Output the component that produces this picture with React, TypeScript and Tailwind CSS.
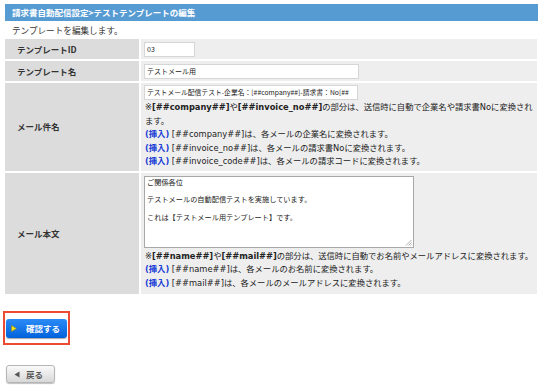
import React from 'react';

const FONT = 'font-["Noto_Sans_CJK_JP","Noto_Sans",sans-serif]';
const NOTE_FONT = 'font-["DejaVu_Sans","Noto_Sans_CJK_JP",sans-serif]';

function Label({ children }: { children: React.ReactNode }) {
  return (
    <div className="flex items-center bg-[#dcdcdc] pl-[12px] text-[8.5px] font-bold text-[#333]">
      {children}
    </div>
  );
}

function Insert({ tag, text }: { tag: string; text: string }) {
  return (
    <div>
      <span className="font-bold text-[#1b3fd6]">(挿入)</span> [{tag}]は、{text}
    </div>
  );
}

export default function App() {
  return (
    <div className={`${FONT} w-[541px] h-[392px] bg-white text-[#222] pt-[4px]`}>
      {/* header */}
      <div className="mx-[5px] w-[533px] h-[17px] bg-[#579bd3] flex items-center pl-[7px] text-[8.5px] font-bold text-white">
        請求書自動配信設定&gt;テストテンプレートの編集
      </div>
      <div className="pl-[12px] h-[18px] flex items-center text-[8.6px] text-[#333]">
        テンプレートを編集します。
      </div>

      {/* form table */}
      <div className="ml-[5px] w-[532px] grid grid-cols-[134px_1fr] gap-[2px]">
        <Label>テンプレートID</Label>
        <div className="bg-[#eeeeee] h-[20px] flex items-center pl-[3px]">
          <div className="w-[51px] h-[15px] bg-white border border-[#d6d6d6] flex items-center pl-[2px] text-[7px]">03</div>
        </div>

        <Label>テンプレート名</Label>
        <div className="bg-[#eeeeee] h-[20px] flex items-center pl-[3px]">
          <div className="w-[215px] h-[15px] bg-white border border-[#d6d6d6] flex items-center pl-[2px] text-[7px]">テストメール用</div>
        </div>

        <Label>メール件名</Label>
        <div className="bg-[#eeeeee] pl-[3px] pt-[2px] pb-[2px] text-[8.3px] leading-[13.5px] text-[#222]">
          <div className="w-[214px] h-[15px] bg-white border border-[#d6d6d6] flex items-center pl-[2px] text-[6.8px] overflow-hidden whitespace-nowrap">
            テストメール配信テスト-企業名：[##company##]-請求書：No[##
          </div>
          <div className={`${NOTE_FONT} pl-[1px] pt-[1px]`}>
            <div className="whitespace-nowrap">
              ※<b>[##company##]</b>や<b>[##invoice_no##]</b>の部分は、送信時に自動で企業名や請求書Noに変換され
            </div>
            <div>ます。</div>
            <Insert tag="##company##" text="各メールの企業名に変換されます。" />
            <Insert tag="##invoice_no##" text="各メールの請求書Noに変換されます。" />
            <Insert tag="##invoice_code##" text="各メールの請求コードに変換されます。" />
          </div>
        </div>

        <Label>メール本文</Label>
        <div className="bg-[#eeeeee] pl-[3px] pt-[3px] pb-[4px] text-[8.3px] leading-[13.5px] text-[#222]">
          <div className="relative w-[270px] h-[72px] bg-white border border-[#a8a8a8] px-[2px] pt-[1px] text-[7.2px] leading-[8.8px]">
            <div>ご関係各位</div>
            <div>&nbsp;</div>
            <div>テストメールの自動配信テストを実施しています。</div>
            <div>&nbsp;</div>
            <div>これは【テストメール用テンプレート】です。</div>
            <svg className="absolute right-[1px] bottom-[1px]" width="7" height="7" viewBox="0 0 7 7">
              <path d="M6.5 1 L1 6.5 M6.5 3.5 L3.5 6.5 M6.5 5.5 L5.5 6.5" stroke="#999" strokeWidth="0.8" />
            </svg>
          </div>
          <div className={`${NOTE_FONT} pl-[1px] pt-[2px]`}>
            <div className="whitespace-nowrap">
              ※<b>[##name##]</b>や<b>[##mail##]</b>の部分は、送信時に自動でお名前やメールアドレスに変換されます。
            </div>
            <Insert tag="##name##" text="各メールのお名前に変換されます。" />
            <Insert tag="##mail##" text="各メールのメールアドレスに変換されます。" />
          </div>
        </div>
      </div>

      {/* confirm button */}
      <div className="mt-[17px] ml-[3px] w-[67px] h-[34px] border-2 border-[#ec4a32] flex items-center pl-[1px]">
        <button className="w-[61px] h-[19px] rounded-[3px] bg-gradient-to-b from-[#2a8bf7] to-[#0062dc] shadow-[0_1px_1px_rgba(0,0,0,0.35)] flex items-center pl-[5px] text-white text-[8.5px] font-bold">
          <svg width="6" height="7" viewBox="0 0 6 7" className="mr-[9px]">
            <path d="M0.5 0.5 L5.5 3.5 L0.5 6.5 Z" fill="#f2e21a" stroke="#a08a00" strokeWidth="0.5" />
          </svg>
          確認する
        </button>
      </div>

      {/* back button */}
      <div className="mt-[20px] ml-[6px]">
        <button className="w-[49px] h-[18px] rounded-[3px] border border-[#b5b5b5] bg-gradient-to-b from-[#fafafa] to-[#d8d8d8] shadow-[0_1px_1px_rgba(0,0,0,0.25)] flex items-center pl-[7px] text-[#555] text-[8.5px] font-bold">
          <svg width="6" height="7" viewBox="0 0 6 7" className="mr-[6px]">
            <path d="M5.5 0.5 L0.5 3.5 L5.5 6.5 Z" fill="#555" />
          </svg>
          戻る
        </button>
      </div>
    </div>
  );
}
